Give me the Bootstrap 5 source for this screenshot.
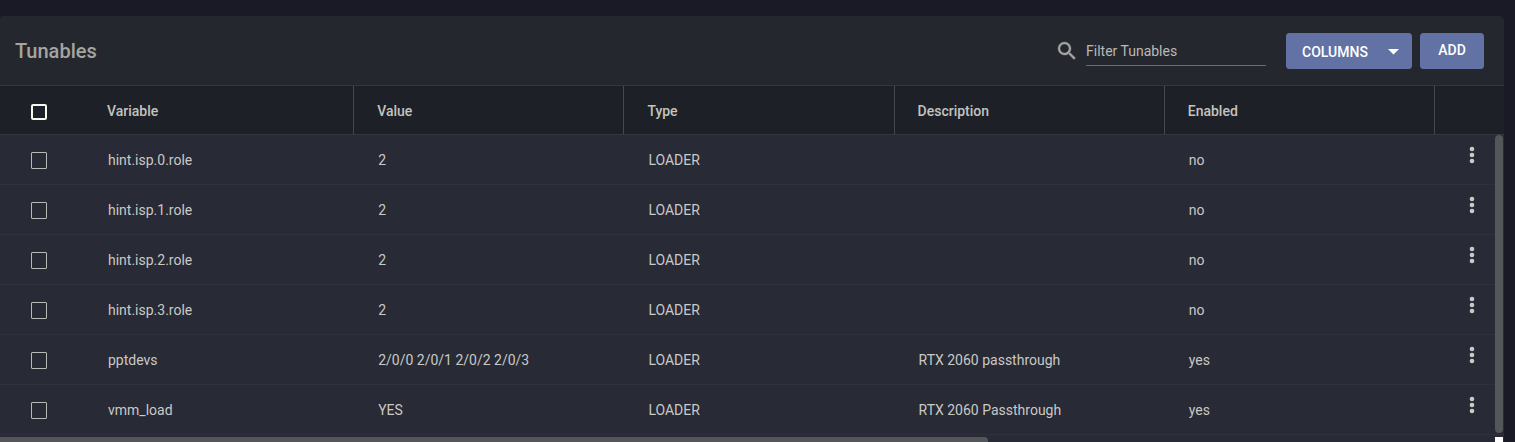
<!DOCTYPE html>
<html lang="en">
<head>
<meta charset="utf-8">
<meta name="viewport" content="width=device-width, initial-scale=1">
<title>Tunables</title>
<link href="https://cdn.jsdelivr.net/npm/bootstrap@5.3.0/dist/css/bootstrap.min.css" rel="stylesheet">
<style>
  body { background: #191a25; color: #c9c9c5; font-family: Roboto, sans-serif; font-size: 14px; line-height: 20px; }
  .panel { background: #282a35; margin: 16px 11px 0 0; border-radius: 4px 6px 0 0; overflow: hidden; }
  .panel-top { background: #25272f; height: 70px; padding: 0 20px 0 15px; border-bottom: 1px solid #333542; }
  .panel-title { font-size: 20px; line-height: 24px; font-weight: 500; color: #a5a5a0; }
  .search-icon { color: #a5a5a0; margin-right: 7px; }
  .filter-input { width: 180px; height: 30px; padding: 2px 0 0; margin-right: 20px; background: transparent; color: #c9c9c5; border: 0; border-bottom: 1px solid #6b6c70; border-radius: 0; outline: 0; }
  .filter-input::placeholder { color: #b9b9b5; opacity: 1; }
  .btn-accent { --bs-btn-color: #fff; --bs-btn-bg: #6272a4; --bs-btn-border-color: #6272a4; --bs-btn-hover-color: #fff; --bs-btn-hover-bg: #7080b2; --bs-btn-hover-border-color: #7080b2; --bs-btn-border-radius: 3px; --bs-btn-font-weight: 500; --bs-btn-font-size: 14px; --bs-btn-line-height: 20px; height: 36px; }
  .btn-columns { padding: 2px 12px 0 15px; width: 126px; margin-right: 8px; }
  .btn-add { width: 64px; padding: 0 0 2px; }
  .tunables { table-layout: fixed; border-collapse: separate; border-spacing: 0; --bs-table-bg: transparent; --bs-table-color: #c9c9c5; }
  .tunables th { background: #1e2027; height: 49px; padding: 2px 0 0 23px; font-weight: 500; color: #c3c3bf; border-bottom: 1px solid #333542; border-right: 1px solid #46484e; vertical-align: middle; }
  .tunables th:first-child, .tunables th:last-child { border-right: 0; }
  .tunables td { height: 50px; padding: 0 0 0 24px; border-bottom: 1px solid #2f313e; color: #c9c9c5; vertical-align: middle; }
  .tunables th:first-child, .tunables td:first-child { padding-left: 31px; }
  .tunables .menu-cell { padding: 0 25px 10px 0; }
  .col-check { width: 84px; }
  .col-menu { width: 69px; }
  .box { appearance: none; display: block; width: 16px; height: 17px; margin: 2px 0 0; border: 1px solid #b9b9b5; border-radius: 1px; }
  .box-all { height: 16px; border: 2px solid #f8f8f2; border-radius: 2px; }
  .box:checked { background: #6272a4; }
  .btn-menu { --bs-btn-color: #c9c9c5; --bs-btn-hover-color: #fff; --bs-btn-padding-x: 0; --bs-btn-padding-y: 0; --bs-btn-border-width: 0; width: 14px; height: 18px; }
  .thumb { background: #55565a; }
  .thumb-y { top: 49px; right: 1px; bottom: 2px; width: 8px; border-radius: 4px; }
  .bar-x { height: 8px; margin: 2px 1px 0 0; }
  .thumb-x { width: 65.75%; border-radius: 0 4px 4px 0; }
  .corner { width: 8px; }
</style>
</head>
<body class="vh-100 overflow-hidden">
<main class="panel">
  <header class="panel-top d-flex align-items-center">
    <h1 class="panel-title mb-0 me-auto">Tunables</h1>
    <label for="filter" class="search-icon d-flex" aria-label="Filter">
      <svg width="24" height="24" viewBox="0 0 24 24" fill="currentColor" stroke="currentColor" stroke-width=".4" aria-hidden="true"><path d="M15.5 14h-.79l-.28-.27A6.471 6.471 0 0 0 16 9.500 6.500 6.500 0 1 0 9.500 16c1.610 0 3.090-.59 4.230-1.570l.27.28v.79l5 4.990L20.490 19l-4.990-5zm-6 0C7.010 14 5 11.990 5 9.500S7.010 5 9.500 5 14 7.010 14 9.500 11.990 14 9.500 14z"/></svg>
    </label>
    <input id="filter" class="filter-input" type="text" placeholder="Filter Tunables">
    <button type="button" class="btn btn-accent btn-columns d-flex align-items-center justify-content-between">COLUMNS
      <svg width="12" height="6" viewBox="0 0 12 6" fill="currentColor" aria-hidden="true"><path d="M1 0h11L6.500 5.500z"/></svg>
    </button>
    <button type="button" class="btn btn-accent btn-add">ADD</button>
  </header>
  <div class="position-relative">
    <table class="table tunables mb-0">
      <colgroup><col class="col-check"><col><col><col><col><col><col class="col-menu"></colgroup>
      <thead>
        <tr>
          <th scope="col"><input type="checkbox" class="box box-all" aria-label="Select all"></th>
          <th scope="col">Variable</th><th scope="col">Value</th><th scope="col">Type</th><th scope="col">Description</th><th scope="col">Enabled</th><th></th>
        </tr>
      </thead>
      <tbody id="rows"></tbody>
    </table>
    <div class="thumb thumb-y position-absolute"></div>
  </div>
  <div class="bar-x d-flex justify-content-between">
    <div class="thumb thumb-x"></div>
    <div class="corner bg-white"></div>
  </div>
</main>
<script src="https://cdn.jsdelivr.net/npm/bootstrap@5.3.0/dist/js/bootstrap.bundle.min.js"></script>
<script>
  const tunables = [
    ['hint.isp.0.role', '2', 'LOADER', '', 'no'],
    ['hint.isp.1.role', '2', 'LOADER', '', 'no'],
    ['hint.isp.2.role', '2', 'LOADER', '', 'no'],
    ['hint.isp.3.role', '2', 'LOADER', '', 'no'],
    ['pptdevs', '2/0/0 2/0/1 2/0/2 2/0/3', 'LOADER', 'RTX 2060 passthrough', 'yes'],
    ['vmm_load', 'YES', 'LOADER', 'RTX 2060 Passthrough', 'yes']
  ];
  document.getElementById('rows').innerHTML = tunables.map(row => `
    <tr>
      <td><input type="checkbox" class="box" aria-label="Select ${row[0]}"></td>
      ${row.map(text => `<td>${text}</td>`).join('')}
      <td class="menu-cell"><button type="button" class="btn btn-menu d-flex align-items-center justify-content-center ms-auto" aria-label="Options for ${row[0]}">
        <svg width="6" height="18" viewBox="0 0 6 18" fill="currentColor" aria-hidden="true"><circle cx="3" cy="3" r="2.300"/><circle cx="3" cy="9" r="2.300"/><circle cx="3" cy="15" r="2.300"/></svg>
      </button></td>
    </tr>`).join('');
</script>
</body>
</html>
